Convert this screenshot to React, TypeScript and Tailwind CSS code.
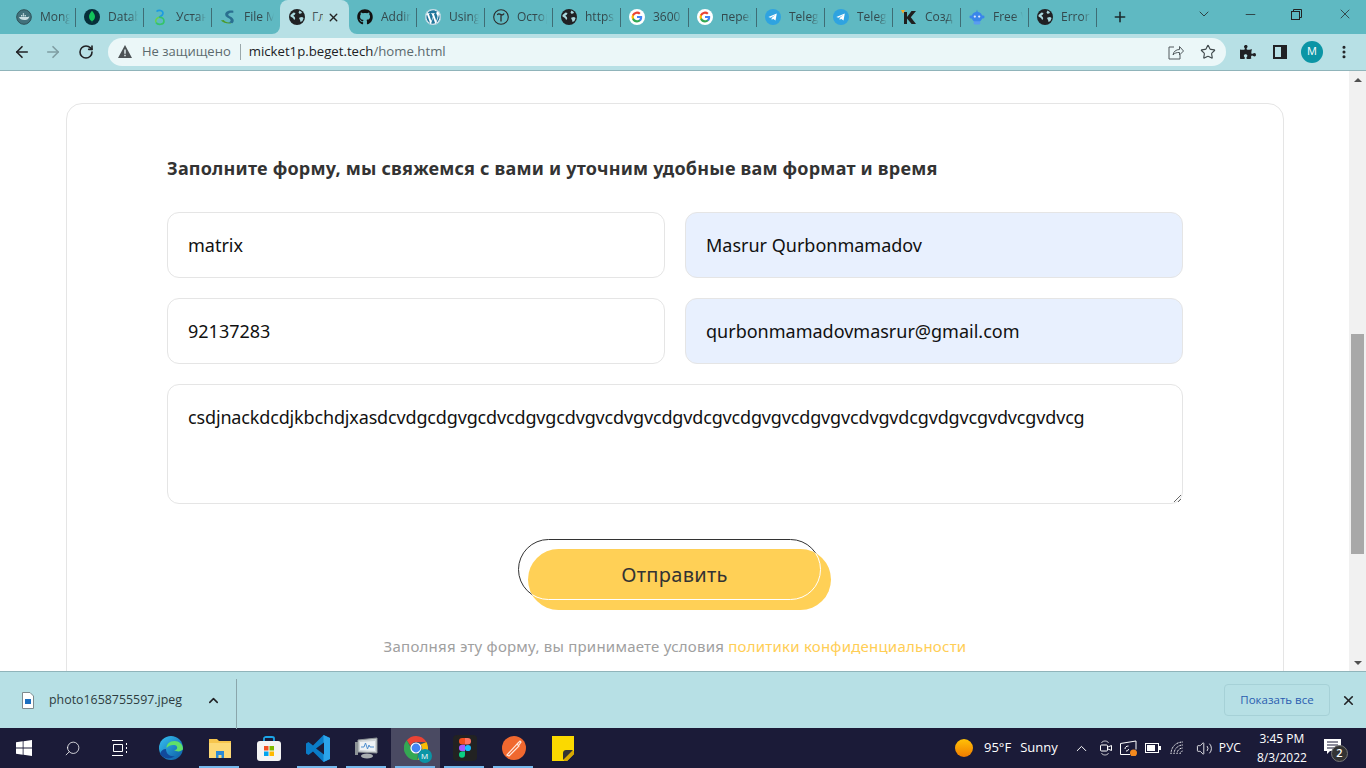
import React from "react";
import { ArrowLeft, ArrowRight, RotateCw, Star, ChevronDown, ChevronUp, Minus, X, Plus, EllipsisVertical, Search, Volume2 } from "lucide-react";
import { FaGithub, FaWordpress, FaPuzzlePiece } from "react-icons/fa";

const Globe = ({ s = 16 }: { s?: number }) => (
  <svg width={s} height={s} viewBox="0 0 16 16">
    <circle cx="8" cy="8" r="8" fill="#202124" />
    <path d="M1.500 6 4.500 3.500l2 .4-.6 1.600-1.600 1.200 1.500 1.400.4 1.600-1 1.300-1.200-2L1.500 7.500zM10.500 1.500l2.500 1.800-.8 1.200-1.900.2-.8-1.300zM10.500 8.500l2.600-.4 1.500 1-1.200 2.800-1.900 1-.4-2-.9-1.200z" fill="#a9d8de" />
  </svg>
);
const GoogleG = () => (
  <svg width="16" height="16" viewBox="0 0 16 16">
    <circle cx="8" cy="8" r="8" fill="#fff" />
    <g transform="translate(2.600 2.600) scale(.45)">
      <path fill="#4285F4" d="M23.500 12.300c0-.8-.1-1.600-.2-2.300H12v4.400h6.500a5.500 5.500 0 0 1-2.400 3.600v3h3.900c2.200-2.100 3.500-5.100 3.500-8.700z" />
      <path fill="#34A853" d="M12 24c3.200 0 6-1.100 8-2.900l-3.900-3c-1.100.7-2.500 1.200-4.100 1.200-3.100 0-5.800-2.100-6.700-5H1.200v3.100A12 12 0 0 0 12 24z" />
      <path fill="#FBBC05" d="M5.300 14.300a7.200 7.200 0 0 1 0-4.600V6.600H1.200a12 12 0 0 0 0 10.800z" />
      <path fill="#EA4335" d="M12 4.800c1.800 0 3.300.6 4.600 1.800L20 3.200A12 12 0 0 0 1.200 6.600l4.100 3.100c.9-2.800 3.600-4.900 6.700-4.900z" />
    </g>
  </svg>
);
const Telegram = () => (
  <svg width="16" height="16" viewBox="0 0 16 16">
    <circle cx="8" cy="8" r="8" fill="#2fa3e0" />
    <path d="M3.300 8 11.800 4.600 10.500 11.600 8 9.800 6.800 10.900 6.600 8.900 10.300 5.900 5.500 8.700z" fill="#fff" />
  </svg>
);
const Docker = () => (
  <svg width="16" height="16" viewBox="0 0 16 16">
    <circle cx="8" cy="8" r="7.300" fill="#42727c" stroke="#2d5057" strokeWidth="1" />
    <path d="M3 8h8.500c.8 0 1.300-.5 1.700-.8.200 2-1.800 3.800-4.700 3.800C5.500 11 3.500 10 3 8z" fill="#c9dfe3" />
    <path d="M5 6h1.300v1.400H5zM6.800 6h1.300v1.400H6.800zM8.600 6h1.300v1.400H8.600zM6.800 4.300h1.300v1.400H6.800z" fill="#c9dfe3" />
  </svg>
);
const Mongo = () => (
  <svg width="16" height="16" viewBox="0 0 16 16">
    <circle cx="8" cy="8" r="8" fill="#062f3a" />
    <path d="M8 1.800c1.700 2 3 3.700 3 6 0 2.200-1.500 3.700-2.700 4.300L8 14.500l-.3-2.400C6.500 11.500 5 10 5 7.800c0-2.300 1.300-4 3-6z" fill="#12c25b" />
  </svg>
);
const Spiral = () => (
  <svg width="16" height="17" viewBox="0 0 16 17" fill="none" strokeWidth="1.600">
    <path d="M4.500 2.500C6.500 .6 11 1 11 4.200c0 2.300-2.500 3.300-4 4" stroke="#1d9be0" />
    <path d="M7 8.200c2.800 0 5 1.100 5 4 0 3.800-6.400 4-8 1.300" stroke="#35c46a" />
    <path d="M4 13.500C3 11.500 4.500 9 7 8.200" stroke="#6ad04d" />
  </svg>
);
const FileMan = () => (
  <svg width="18" height="18" viewBox="0 0 18 18">
    <path d="M15 2C10 1 5 3 6 7c.7 3 6 3 6 6 0 1.500-2 2-4 2l6 1c2-1.500 2-4.500 0-6-1.700-1.400-5-2-4.700-4C9.500 4.500 12 4 15 4.300z" fill="#2a6f90" />
    <path d="M1 13c3 3 8 4 12 3-3-.3-7-1-9-3.500z" fill="#4c9a2a" />
  </svg>
);
const Tilda = () => (
  <svg width="16" height="16" viewBox="0 0 16 16" fill="none" stroke="#2b2b2b" strokeWidth="1.100">
    <circle cx="8" cy="8" r="7.300" />
    <path d="M4.300 6c.7-1.200 1.500-1.300 2.500-.8s2 1 2.800.6c.7-.3 1.200-.8 1.500-1.300M8 6v6.500" strokeWidth="1.300" />
  </svg>
);
const KIcon = () => (
  <svg width="16" height="16" viewBox="0 0 16 16">
    <path d="M0 1h4L2 4.500z" fill="#f5a623" />
    <path d="M3 3h3v5l4.500-6H15L9.800 8.200 15 15h-4.400L6 9.500V15H3z" fill="#1f1f1f" />
  </svg>
);
const Robot = () => (
  <svg width="17" height="17" viewBox="0 0 17 17">
    <path d="M8.500 0l.8 3.500H7.700z" fill="#2c7be5" />
    <circle cx="8.500" cy="8" r="5.700" fill="#3a86ea" />
    <rect x="0.500" y="6.500" width="16" height="3" rx="1.500" fill="#3a86ea" />
    <rect x="5" y="12.500" width="7" height="3.500" rx="1.500" fill="#5a9cf0" />
    <circle cx="6.200" cy="7.500" r="1.200" fill="#d8e8ff" />
    <circle cx="10.800" cy="7.500" r="1.200" fill="#d8e8ff" />
  </svg>
);

const tabs: { icon: React.ReactNode; label: string; active?: boolean }[] = [
  { icon: <Docker />, label: "Mongo" },
  { icon: <Mongo />, label: "Datab" },
  { icon: <Spiral />, label: "Устан" },
  { icon: <FileMan />, label: "File M" },
  { icon: <Globe />, label: "Гл", active: true },
  { icon: <FaGithub size={16} color="#111" />, label: "Adding" },
  { icon: <FaWordpress size={16} color="#21759b" className="rounded-full bg-white" />, label: "Using" },
  { icon: <Tilda />, label: "Остор" },
  { icon: <Globe />, label: "https" },
  { icon: <GoogleG />, label: "3600" },
  { icon: <GoogleG />, label: "перев" },
  { icon: <Telegram />, label: "Telegr" },
  { icon: <Telegram />, label: "Telegr" },
  { icon: <KIcon />, label: "Созд" },
  { icon: <Robot />, label: "Free V" },
  { icon: <Globe />, label: "Error" },
];

const Flare = ({ flip }: { flip?: boolean }) => (
  <svg width="8" height="8" viewBox="0 0 8 8" className={flip ? "absolute bottom-0 -right-2 -scale-x-100" : "absolute bottom-0 -left-2"}>
    <path d="M8 0v8H0a8 8 0 0 0 8-8z" fill="#b7e0e5" />
  </svg>
);

const Tab = ({ icon, label, active, sep }: { icon: React.ReactNode; label: string; active?: boolean; sep: boolean }) =>
  active ? (
    <div className="relative flex h-[34px] w-[69px] shrink-0 items-center rounded-t-lg bg-[#b7e0e5] pl-[9px] pr-[9px]">
      <Flare />
      <Flare flip />
      <span className="flex w-4 shrink-0 items-center justify-center">{icon}</span>
      <span className="ml-[7px] w-[11px] overflow-hidden whitespace-nowrap text-xs text-[#45565a]">{label}</span>
      <X size={13} strokeWidth={2.6} className="ml-[4px] shrink-0 text-[#222]" />
    </div>
  ) : (
    <div className={"flex h-[19px] w-[68px] shrink-0 items-center pl-2 " + (sep ? "border-r border-[#3f6d75]" : "")}>
      <span className="flex w-4 shrink-0 items-center justify-center">{icon}</span>
      <span className="ml-2 w-[30px] overflow-hidden whitespace-nowrap text-xs text-[#34494d] [mask-image:linear-gradient(to_right,black_70%,transparent)]">{label}</span>
    </div>
  );

const Slot = ({ children, line, active }: { children: React.ReactNode; line?: boolean; active?: boolean }) => (
  <div className={"relative flex h-10 w-[49px] items-center justify-center " + (active ? "bg-[#4a4a62]" : "")}>
    {children}
    {line && <span className="absolute bottom-0 left-[4px] right-[5px] h-[2px] bg-[#76b9ed]" />}
  </div>
);

const inputClass =
  "h-[66px] w-[498px] rounded-xl border border-[#e5e5e5] px-5 text-lg text-[#111] outline-none";

export default function App() {
  return (
    <div className="flex h-[768px] w-[1366px] flex-col overflow-hidden bg-white font-['Noto_Sans',sans-serif]">
      {/* tab strip */}
      <div className="flex h-[34px] items-center bg-[#5fb9c2] pl-2 font-['Open_Sans',sans-serif]">
        {tabs.map((t, i) => (
          <Tab key={i} icon={t.icon} label={t.label} active={t.active} sep={!t.active && !tabs[i + 1]?.active} />
        ))}
        <Plus size={16} strokeWidth={2.4} className="ml-[15px] text-[#1d2b2e]" />
        <ChevronDown size={16} strokeWidth={1.2} className="ml-[68px] -translate-y-[3px] text-[#222]" />
        <Minus size={15} strokeWidth={1.2} className="ml-[31px] -translate-y-[3px] text-[#222]" />
        <svg width="11" height="11" viewBox="0 0 11 11" fill="none" stroke="#222" className="ml-[33px] -translate-y-[3px]">
          <rect x=".5" y="2.500" width="8" height="8" />
          <path d="M2.500 2.500V.5h8v8H8.500" />
        </svg>
        <X size={16} strokeWidth={1.1} className="ml-[35px] -translate-y-[3px] text-[#222]" />
      </div>

      {/* toolbar */}
      <div className="flex h-[37px] items-center border-b border-[#90b4ba] bg-[#b7e0e5] pb-[1px] font-['Open_Sans',sans-serif]">
        <ArrowLeft size={18} strokeWidth={2.2} className="ml-[13px] text-[#202124]" />
        <ArrowRight size={18} strokeWidth={2.2} className="ml-[13px] text-[#7f9da2]" />
        <RotateCw size={16} strokeWidth={2.4} className="ml-[16px] text-[#202124]" />
        <div className="ml-[14px] flex h-7 w-[1118px] items-center rounded-full bg-[#ebf7f8] pl-[10px]">
          <svg width="14" height="13" viewBox="0 0 14 13">
            <path d="M7 0l7 13H0z" fill="#4d5356" />
            <path d="M6.300 4.500h1.400v4.300H6.300zM6.300 9.800h1.400v1.400H6.300z" fill="#ebf7f8" />
          </svg>
          <span className="ml-[10px] text-[13px] text-[#5b6a6e]">Не защищено</span>
          <span className="ml-[9px] h-[16px] w-px bg-[#9aa8ab]" />
          <span className="ml-[8px] text-[13.200px] text-[#202124]">
            micket1p.beget.tech<span className="text-[#5b6a6e]">/home.html</span>
          </span>
          <svg width="16" height="16" viewBox="0 0 16 16" fill="none" stroke="#50595c" strokeWidth="1" className="ml-auto">
            <path d="M6 3H1v12h11v-4M5 11c.5-3.500 3-5.500 6.500-5.500V2.500L15.500 7l-4 4V8.500C9 8.300 6.500 9 5 11z" />
          </svg>
          <Star size={16} strokeWidth={1.7} className="ml-4 mr-[10px] text-[#3f484b]" />
        </div>
        <FaPuzzlePiece size={16} className="ml-[14px] text-[#202124]" />
        <svg width="14" height="14" viewBox="0 0 14 14" className="ml-[17px]">
          <path d="M0 0h14v14H0z" fill="#202124" />
          <path d="M2 2h6v10H2z" fill="#b7e0e5" />
        </svg>
        <span className="ml-[14px] flex h-[22px] w-[22px] items-center justify-center rounded-full bg-[#0b95a5] text-[11px] text-white">M</span>
        <EllipsisVertical size={16} strokeWidth={2.6} className="ml-[13px] text-[#202124]" />
      </div>

      {/* viewport */}
      <div className="flex min-h-0 flex-1 overflow-hidden">
        <main className="min-h-0 flex-1 overflow-hidden pl-[66px] pt-8">
          <section className="h-[700px] w-[1218px] rounded-2xl border border-[#e5e5e5] px-[100px] pt-[51px]">
            <h2 className="text-lg leading-[26px] font-bold tracking-[0.21px] text-[#333]">
              Заполните форму, мы свяжемся с вами и уточним удобные вам формат и время
            </h2>
            <div className="mt-[31px] flex gap-5">
              <input readOnly value="matrix" className={inputClass} />
              <input readOnly value="Masrur Qurbonmamadov" className={inputClass + " bg-[#e8f0fe]"} />
            </div>
            <div className="mt-5 flex gap-5">
              <input readOnly value="92137283" className={inputClass} />
              <input readOnly value="qurbonmamadovmasrur@gmail.com" className={inputClass + " bg-[#e8f0fe]"} />
            </div>
            <textarea
              readOnly
              value="csdjnackdcdjkbchdjxasdcvdgcdgvgcdvcdgvgcdvgvcdvgvcdgvdcgvcdgvgvcdgvgvcdvgvdcgvdgvcgvdvcgvdvcg"
              className="mt-5 block h-[120px] w-[1016px] rounded-xl border border-[#e5e5e5] px-5 py-[19px] text-lg leading-[26px] tracking-[-0.15px] text-[#111] outline-none"
            />
            <div className="relative mx-auto mt-[35px] h-[71px] w-[314px]">
              <span className="absolute left-0 top-0 h-[61px] w-[303px] rounded-full border border-[#333]" />
              <button className="absolute left-[10px] top-[10px] flex h-[61px] w-[303px] items-center justify-center overflow-hidden rounded-full bg-[#ffd056] pb-[10px] pr-[10px] text-xl tracking-[0.3px] text-[#333]">
                <span className="absolute -left-[10px] -top-[10px] h-[61px] w-[303px] rounded-full border border-white" />
                Отправить
              </button>
            </div>
            <p className="mt-[26px] text-center text-[15px] leading-[20px] tracking-[0.23px] text-[#a0a0a0]">
              Заполняя эту форму, вы принимаете условия <span className="text-[#ffce55]">политики конфиденциальности</span>
            </p>
          </section>
        </main>
        <div className="flex w-[17px] shrink-0 flex-col bg-[#f1f1f1]">
          <div className="flex h-[17px] items-center justify-center">
            <span className="h-0 w-0 border-x-[4px] border-b-[4px] border-x-transparent border-b-[#505050]" />
          </div>
          <div className="mx-[2px] mt-[246px] h-[220px] bg-[#a8a8a8]" />
          <div className="mt-auto flex h-[17px] items-center justify-center">
            <span className="h-0 w-0 border-x-[4px] border-t-[4px] border-x-transparent border-t-[#505050]" />
          </div>
        </div>
      </div>

      {/* downloads bar */}
      <div className="flex h-[57px] items-center border-t border-[#90b4ba] bg-[#b7e0e5] font-['Open_Sans',sans-serif]">
        <svg width="12" height="17" viewBox="0 0 12 17" className="ml-[22px]">
          <path d="M.5.500h7.500l3.500 3.500v12.500H.5z" fill="#fff" stroke="#7d8a8d" />
          <rect x="3" y="7" width="6" height="5" fill="#1a6fc0" />
        </svg>
        <span className="ml-[15px] text-[12.400px] text-[#2d3c40]">photo1658755597.jpeg</span>
        <ChevronUp size={15} strokeWidth={2.4} className="ml-[24px] text-[#202124]" />
        <span className="ml-[15px] h-[50px] w-px translate-y-[4px] bg-[#8aa6ab]" />
        <span className="ml-auto flex h-8 w-[106px] items-center justify-center rounded border border-[#a6d1d7] text-[11.500px] text-[#2a5db0]">Показать все</span>
        <X size={15} strokeWidth={2.6} className="ml-[11px] mr-[10px] text-[#202124]" />
      </div>

      {/* taskbar */}
      <div className="flex h-10 items-center bg-[#1b1b38] font-['Open_Sans',sans-serif] text-white">
        <div className="flex w-12 justify-center">
          <svg width="16" height="16" viewBox="0 0 16 16" fill="#fff">
            <path d="M0 2.300 6.700 1.300v6.300H0zM7.500 1.200 16 0v7.600H7.500zM0 8.400h6.700v6.300L0 13.700zM7.500 8.400H16V16l-8.500-1.200z" />
          </svg>
        </div>
        <div className="flex w-12 justify-center">
          <Search size={17} strokeWidth={1.1} className="-scale-x-100" />
        </div>
        <div className="flex w-12 justify-center">
          <svg width="16" height="16" viewBox="0 0 16 16" fill="none" stroke="#fff">
            <path d="M0 .5h11M0 15.500h11M1.500 4.500h9v7h-9zM14.500 3v2M14.500 7v2M14.500 11v2" />
          </svg>
        </div>
        <div className="ml-[2px] flex">
          <Slot>
            <svg width="24" height="24" viewBox="0 0 24 24">
              <defs>
                <linearGradient id="e1" x1="0" y1="0" x2="1" y2="1">
                  <stop offset="0" stopColor="#35c1f1" />
                  <stop offset="1" stopColor="#0c59a4" />
                </linearGradient>
              </defs>
              <circle cx="12" cy="12" r="12" fill="url(#e1)" />
              <path d="M24 13c0-5-4-8-8.500-8-5 0-8 3-8 7 2-2.500 5-3.500 8-3 2.500.5 3 2 2.500 3.500-.4 1-1.500 1.500-3 1.500 2 1.500 5 2 7 .8 1.300-.7 2-1.300 2-1.800z" fill="#5fe06a" />
              <path d="M7 13c0 5 4 8 9 7-4 3.500-11 3.500-15-2 .5-3 3-5 6-5z" fill="#114a9c" />
            </svg>
          </Slot>
          <Slot line>
            <svg width="22" height="20" viewBox="0 0 22 20">
              <path d="M0 1h8l2 2h12v17H0z" fill="#f6c54d" />
              <path d="M0 5h22v15H0z" fill="#fcd976" />
              <path d="M7 13h8v7h-2.500v-3h-3v3H7z" fill="#2a8ad6" />
            </svg>
          </Slot>
          <Slot>
            <svg width="24" height="25" viewBox="0 0 24 25">
              <path d="M7 6V2.500C7 1.500 8 1 9 1h6c1 0 2 .5 2 1.500V6" fill="none" stroke="#1ca5e8" strokeWidth="1.800" />
              <rect y="5" width="24" height="20" rx="3" fill="#f4f4f4" />
              <rect x="7" y="10" width="4.500" height="4.500" fill="#f25022" />
              <rect x="12.500" y="10" width="4.500" height="4.500" fill="#7fba00" />
              <rect x="7" y="15.500" width="4.500" height="4.500" fill="#00a4ef" />
              <rect x="12.500" y="15.500" width="4.500" height="4.500" fill="#ffb900" />
            </svg>
          </Slot>
          <Slot line>
            <svg width="24" height="27" viewBox="0 0 24 27">
              <path d="M17.500 0 24 3v21l-6.500 3L7 16.500 2.500 20 0 18.500v-10L2.500 7 7 10.500z" fill="#0a7cc8" />
              <path d="M17.500 0 24 3v21l-6.500 3z" fill="#2ba3ea" />
              <path d="M18 7.500v12L10 13.500z" fill="#1b1b38" />
            </svg>
          </Slot>
          <Slot line>
            <svg width="24" height="24" viewBox="0 0 24 24">
              <path d="M3 4 22 2v15L3 16z" fill="#cfd4d6" stroke="#8d9396" />
              <path d="M5 6l15-1v10L5 14z" fill="#eef2f5" />
              <path d="M6 11l3 0 1.500-4 2 6 1.500-4 1 2h4" fill="none" stroke="#4f8fcf" />
              <ellipse cx="12" cy="20" rx="6" ry="2.500" fill="#a8adb0" />
              <rect x="0" y="6" width="3" height="13" fill="#8d9396" />
            </svg>
          </Slot>
          <Slot line active>
            <span className="relative block h-[24px] w-[24px]">
              <svg width="24" height="24" viewBox="0 0 24 24">
                <path d="M12 0a12 12 0 0 1 10.400 6H12a6 6 0 0 0-5.600 3.800L2.800 4.300A12 12 0 0 1 12 0z" fill="#ea4335" />
                <path d="M22.400 6a12 12 0 0 1-9 18l3.600-8a6 6 0 0 0-.5-7.500z" fill="#fbbc05" />
                <path d="M13.400 24A12 12 0 0 1 2.800 4.300L7 12a6 6 0 0 0 7 5.800z" fill="#34a853" />
                <circle cx="12" cy="12" r="5" fill="#4285f4" stroke="#fff" strokeWidth="1.200" />
              </svg>
              <span className="absolute -bottom-[3px] -right-[4px] flex h-[14px] w-[14px] items-center justify-center rounded-full bg-[#0b95a5] text-[8px] text-white">M</span>
            </span>
          </Slot>
          <Slot line>
            <span className="flex h-[26px] w-6 items-center justify-center rounded-sm bg-[#222]">
              <svg width="12" height="20" viewBox="0 0 12 20">
                <path d="M0 3.300A3.300 3.300 0 0 1 3.300 0H6v6.600H3.300A3.300 3.300 0 0 1 0 3.300z" fill="#f24e1e" />
                <path d="M6 0h2.700a3.300 3.300 0 0 1 0 6.600H6z" fill="#ff7262" />
                <path d="M0 10a3.300 3.300 0 0 1 3.300-3.300H6v6.600H3.300A3.300 3.300 0 0 1 0 10z" fill="#a259ff" />
                <circle cx="8.900" cy="10" r="3.100" fill="#1abcfe" />
                <path d="M0 16.700a3.300 3.300 0 0 1 3.300-3.300H6v3.300a3 3 0 0 1-6 0z" fill="#0acf83" />
              </svg>
            </span>
          </Slot>
          <Slot line>
            <svg width="24" height="24" viewBox="0 0 24 24">
              <circle cx="12" cy="12" r="12" fill="#f0682f" />
              <path d="M5 19 15 8l2 2L7 20zM15 8l3-3 1 1-2 3" fill="none" stroke="#ffe8de" strokeWidth="1.200" />
            </svg>
          </Slot>
          <Slot>
            <svg width="22" height="25" viewBox="0 0 22 25">
              <path d="M0 0h22v18l-7 7H0z" fill="#fbd900" />
              <path d="M22 15v3l-7 7h-3v-6c0-2 1-4 3-4z" fill="#d9a800" />
              <path d="M21 14H14c-1.500 0-3 1-3 3v7z" fill="#333" />
            </svg>
          </Slot>
        </div>

        <span className="ml-[368px] h-[18px] w-[18px] shrink-0 rounded-full bg-gradient-to-b from-[#ffc107] to-[#ef7b00]" />
        <span className="ml-[11px] text-[13px]">95°F</span>
        <span className="ml-[9px] text-[13px]">Sunny</span>
        <ChevronUp size={17} strokeWidth={1.4} className="ml-[15px]" />
        <svg width="12" height="16" viewBox="0 0 12 16" fill="none" stroke="#fff" className="ml-[10px]">
          <path d="M1.500 3C2 1.500 3.500 1 5 1s3 .5 3.500 2M1.500 13C2 14.500 3.500 15 5 15s3-.5 3.500-2" strokeWidth=".7" />
          <rect x=".5" y="5" width="7" height="6" rx="1" />
          <path d="M8 7l3.500-1.500v5L8 9" />
        </svg>
        <svg width="17" height="16" viewBox="0 0 17 16" fill="none" stroke="#fff" className="ml-[8px]">
          <path d="M.5 3.500 16 1v8.500M.5 3.500v11H10" />
          <path d="M5 9c0-2 1.500-3 3.500-3M8.500 9c0 1.500-1 2-2.500 2" />
          <circle cx="13.500" cy="13" r="3.500" fill="#f58a1f" stroke="none" />
        </svg>
        <svg width="16" height="10" viewBox="0 0 16 10" className="ml-[8px]">
          <rect x=".5" y=".5" width="13" height="9" fill="none" stroke="#fff" />
          <rect x="2" y="2" width="8" height="6" fill="#fff" />
          <rect x="14" y="3" width="2" height="4" fill="#fff" />
        </svg>
        <svg width="15" height="14" viewBox="0 0 15 14" fill="none" stroke="#fff" strokeDasharray="1 .6" className="ml-[9px]">
          <path d="M1 13C1 6 6 1 13 1M4 13c0-5 4-9 9-9M7 13c0-3.500 2.500-6 6-6M10 13c0-1.700 1.300-3 3-3" />
        </svg>
        <Volume2 size={17} strokeWidth={1.2} className="ml-[11px]" />
        <span className="ml-[6px] text-xs">РУС</span>
        <div className="ml-[12px] flex w-[58px] flex-col items-center text-xs leading-[19px]">
          <span>3:45 PM</span>
          <span>8/3/2022</span>
        </div>
        <span className="relative ml-[13px] block h-[14px] w-4 -translate-y-[2px]">
          <svg width="17" height="16" viewBox="0 0 17 16">
            <path d="M0 0h17v12H6l-3 3v-3H0z" fill="#fff" />
            <path d="M3 3h11M3 6h11M3 9h7" stroke="#1b1b38" />
          </svg>
          <span className="absolute -bottom-[9px] -right-[8px] flex h-[17px] w-[17px] items-center justify-center rounded-full border border-[#777] bg-[#333] text-[11px] font-semibold">2</span>
        </span>
      </div>
    </div>
  );
}
